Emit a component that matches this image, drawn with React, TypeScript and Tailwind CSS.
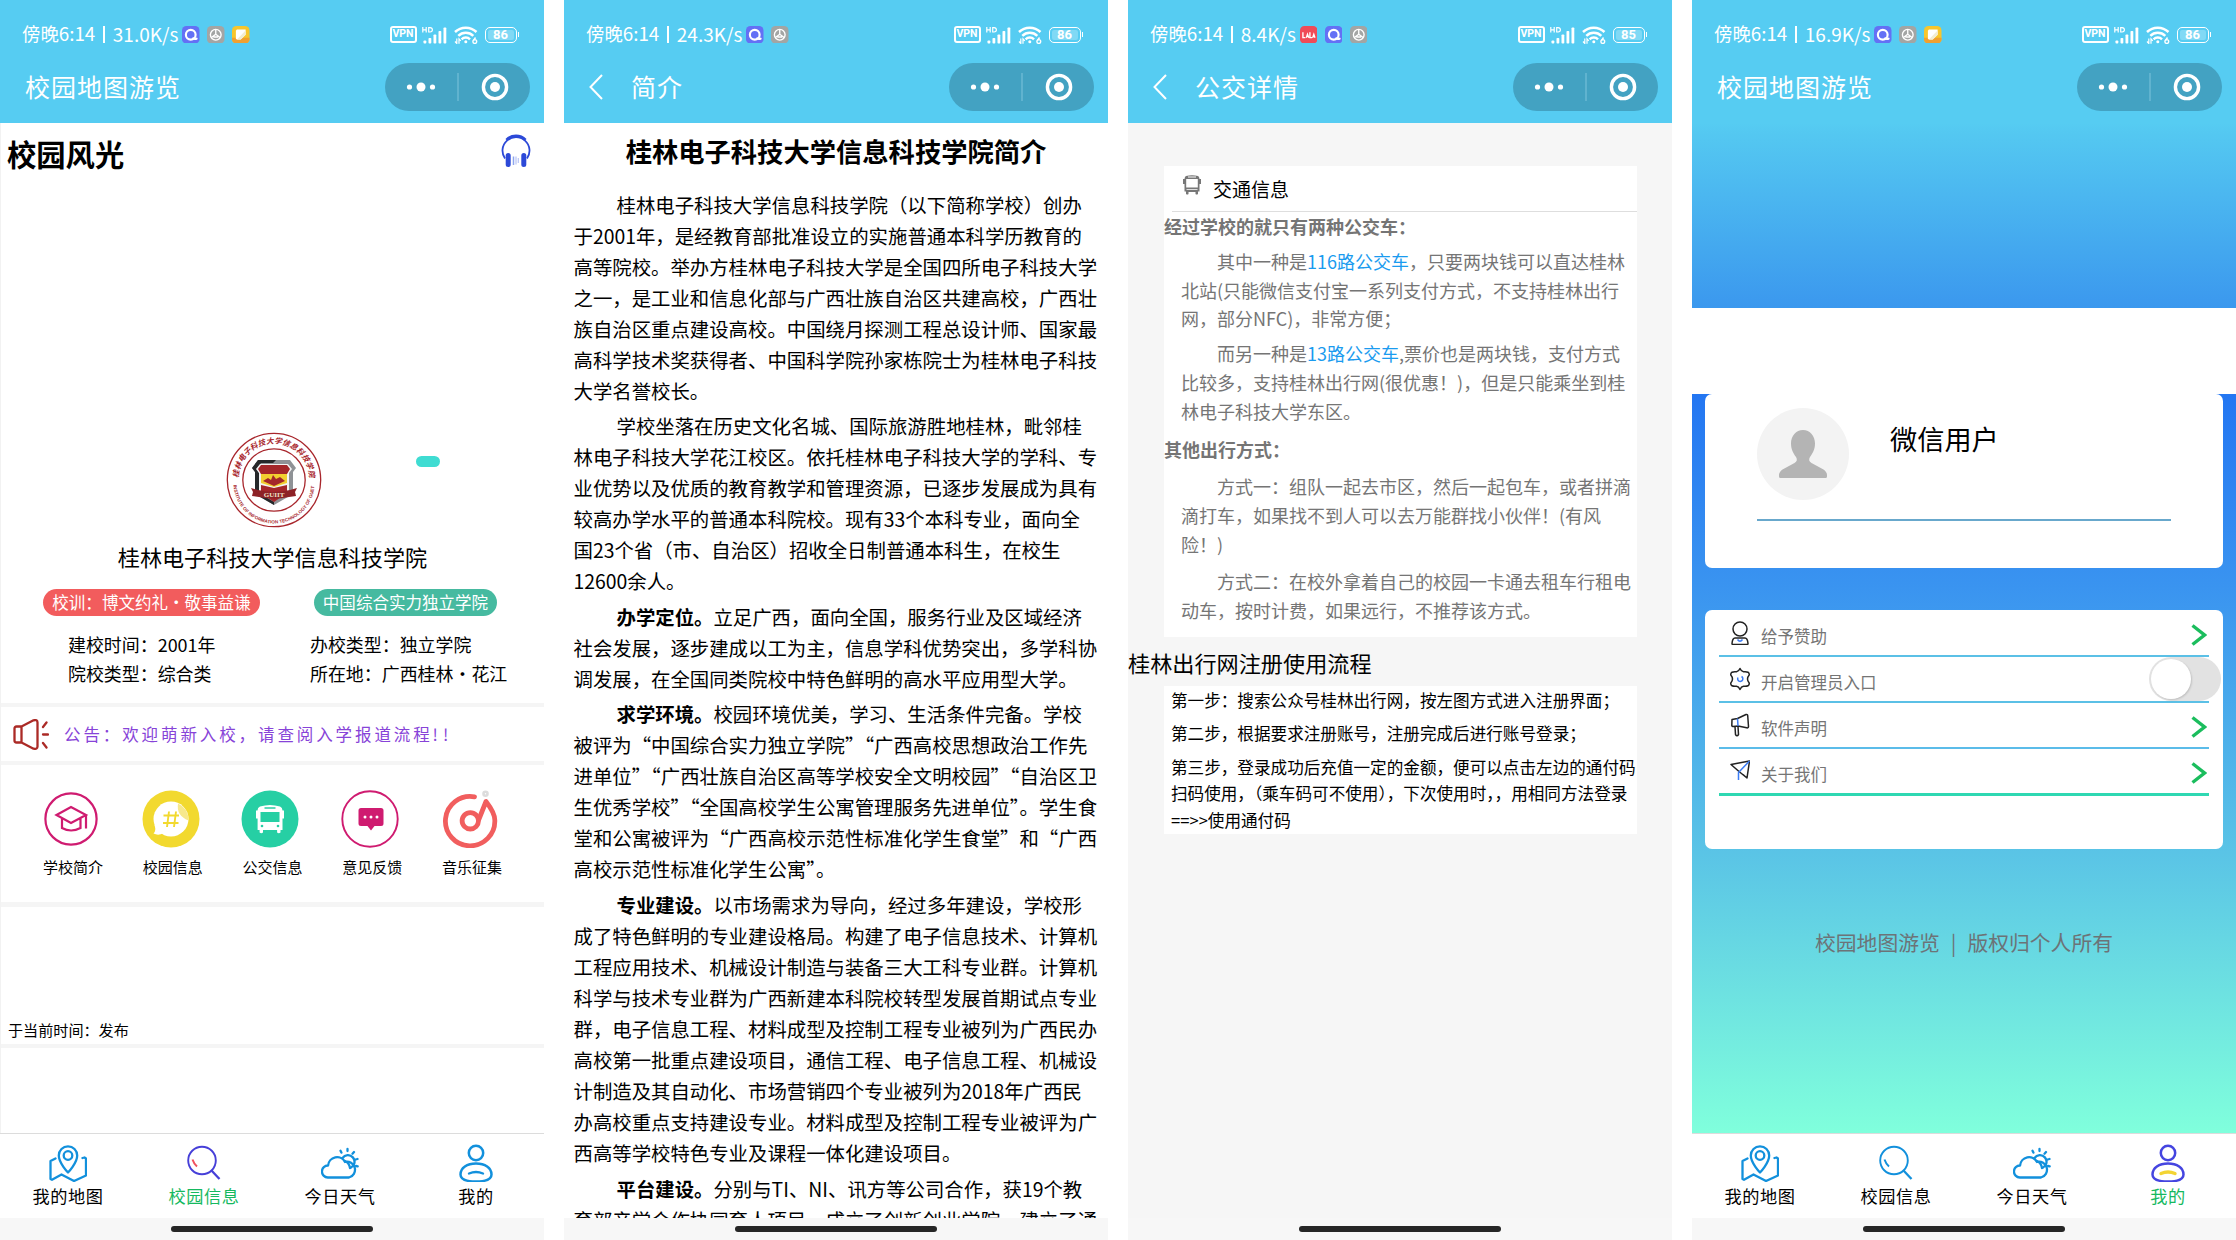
import React from "react";

type TabKey = "map" | "info" | "weather" | "me";

/* ---------- status bar ---------- */

function QApp() {
  return (
    <svg viewBox="0 0 18 18" className="h-[17.5px] w-[17.5px]">
      <rect width="18" height="18" rx="4.5" fill="#6470f5" />
      <circle cx="9" cy="9" r="5" fill="none" stroke="#fff" strokeWidth="2.2" />
      <path d="M11.500 12.800q1.500 1 3.500.2" fill="none" stroke="#fff" strokeWidth="2.200" strokeLinecap="round" />
    </svg>
  );
}

function WheelApp() {
  return (
    <svg viewBox="0 0 18 18" className="h-[17.5px] w-[17.5px]">
      <rect width="18" height="18" rx="4.5" fill="#a3a5a4" />
      <g fill="none" stroke="#fff" strokeWidth="1.4">
        <circle cx="9" cy="9" r="5.500" />
        <path d="M9 4v4.500M9 8.500l-4.500 3.300M9 8.500l4.500 3.300M6.500 11.300h5" />
      </g>
    </svg>
  );
}

function NoteApp() {
  return (
    <svg viewBox="0 0 18 18" className="h-[17.5px] w-[17.5px]">
      <rect width="18" height="18" rx="4.500" fill="#f7c62c" />
      <path d="M0 12v1.500A4.500 4.500 0 0 0 4.500 18h9a4.500 4.500 0 0 0 4.500-4.500V12z" fill="#f0a030" />
      <path d="M5 3.500h9V9l-5 5H5l-1-1V5z" fill="#fff" />
      <path d="M14 4.500V9l-5 5H5z" fill="#f2edd2" />
    </svg>
  );
}

function RedApp() {
  return (
    <svg viewBox="0 0 18 18" className="h-[17.5px] w-[17.5px]">
      <rect width="18" height="18" rx="4.500" fill="#f04b58" />
      <path d="M3 6.500v5.500h2.500M6.500 12l1.200-3.500L9 12M10.200 6.500v5.500h2.300M13 12l1.200-3.500 1.200 3.500" fill="none" stroke="#fff" strokeWidth="1.4" />
    </svg>
  );
}

const apps = { q: QApp, wheel: WheelApp, note: NoteApp, red: RedApp };

function Signal() {
  return (
    <svg viewBox="0 0 25 18" className="ml-[5px] h-[18px] w-[25px]" fill="#fff">
      <path d="M.8 1v5.600M4.200 1v5.600M.8 3.800h3.400M6.700 1.600v4.400h1.300q2.400-.2 2.400-2.200t-2.400-2.200z" stroke="#fff" strokeWidth="1.200" fill="none" />
      <rect x="1.500" y="14.500" width="2.800" height="3" rx=".8" />
      <rect x="6.500" y="12" width="2.800" height="5.500" rx=".8" />
      <rect x="11.500" y="8.500" width="2.800" height="9" rx=".8" />
      <rect x="16.500" y="5" width="2.800" height="12.500" rx=".8" />
      <rect x="21.500" y="1.500" width="2.800" height="16" rx=".8" />
    </svg>
  );
}

function Wifi() {
  return (
    <svg viewBox="0 0 24 18" className="ml-[7px] h-[18px] w-6" fill="none" stroke="#fff" strokeWidth="2.500">
      <path d="M1 6a15.500 15.500 0 0 1 21.500 0" />
      <path d="M4.300 9.800a10.600 10.600 0 0 1 15 0" />
      <path d="M7.600 13.300a6 6 0 0 1 8.400 0" />
      <circle cx="11.800" cy="15.800" r="1.500" fill="#fff" stroke="none" />
      <path d="M2.800 12.500v5l-1.800-2M5 17.800v-5l1.800 2" strokeWidth="1.200" />
      <path d="M21.500 11.500l-2 3" strokeWidth="1.400" />
      <circle cx="20.800" cy="15.500" r="1.900" strokeWidth="1.400" />
    </svg>
  );
}

function StatusBar({ speed, icons, battery }: { speed: string; icons: (keyof typeof apps)[]; battery: string }) {
  return (
    <div className="flex h-[21px] items-center pl-[22px] pr-[25px] text-white">
      <span className="-mt-[2.500px] whitespace-nowrap text-[18.4px] leading-[21px]">
        傍晚<span className="text-[18.800px]">6:14</span>
      </span>
      <span className="mx-[8px] h-[17px] w-[1.500px] bg-white" />
      <span className="-mt-[2.500px] whitespace-nowrap text-[19px] leading-[21px]">{speed}</span>
      <span className="ml-[4px] flex gap-[7.500px]">
        {icons.map((k) => {
          const I = apps[k];
          return <I key={k} />;
        })}
      </span>
      <span className="ml-auto flex h-[17px] w-[27px] items-center justify-center rounded-[3px] border-2 border-white font-[Roboto] text-[10.500px] font-bold leading-none">
        VPN
      </span>
      <Signal />
      <Wifi />
      <span className="ml-[7px] flex h-4 w-8 items-center justify-center rounded-[5px] border-[1.500px] border-white p-[2px]">
        <span className="flex h-full w-full items-center justify-center rounded-[2px] bg-white/25 font-[Roboto] text-[13px] font-bold leading-none">
          {battery}
        </span>
      </span>
      <span className="ml-px h-[5px] w-[1.500px] bg-white" />
    </div>
  );
}

function Header({
  title, back, speed, icons, battery = "86",
}: { title: string; back?: boolean; speed: string; icons: (keyof typeof apps)[]; battery?: string }) {
  return (
    <header className="h-[123px] shrink-0 bg-[#56ccf2] pt-[24px]">
      <StatusBar speed={speed} icons={icons} battery={battery} />
      <div className="mt-[18px] flex h-12 items-center pl-[25px] pr-[14px] text-white">
        {back && (
          <svg viewBox="0 0 14 26" className="mr-[28px] h-[26px] w-[14px]" fill="none" stroke="#fff" strokeWidth="2">
            <path d="M13 1L1.500 13 13 25" />
          </svg>
        )}
        <h1 className="-mt-[3px] whitespace-nowrap text-[25px] leading-[48px] tracking-[1px]">{title}</h1>
        <div className="ml-auto flex h-12 w-[145px] items-center rounded-full bg-[#43a2c2]">
          <svg viewBox="0 0 145 48" className="h-12 w-[145px]" fill="#fff">
            <circle cx="24.500" cy="24" r="2.600" />
            <circle cx="36" cy="24" r="4.500" />
            <circle cx="47.500" cy="24" r="2.600" />
            <path d="M73 10v28" stroke="#7fc4dc" />
            <circle cx="110" cy="24" r="11.600" fill="none" stroke="#fff" strokeWidth="3.400" />
            <circle cx="110" cy="24" r="5" />
          </svg>
        </div>
      </div>
    </header>
  );
}

/* ---------- tab bar ---------- */

function TabIcon({ kind, active }: { kind: TabKey; active: boolean }) {
  const c = "#1290dc";
  if (kind === "map")
    return (
      <svg viewBox="0 0 38 38" className="h-[38px] w-[38px]" fill="none" stroke={c} strokeWidth="2.300" strokeLinecap="round" strokeLinejoin="round">
        <path d="M19 28.500S9.800 19 9.800 11.500a9.200 9.200 0 0 1 18.400 0C28.200 19 19 28.500 19 28.500z" />
        <circle cx="19" cy="11.500" r="4.300" />
        <path d="M6.500 14.500L1.500 17v18l1.500.8 9.500-5.300L25 37l12-5.500V14.500l-1.500-1-2 .5" />
      </svg>
    );
  if (kind === "info")
    return (
      <svg viewBox="0 0 38 38" className="h-[38px] w-[38px]" fill="none" stroke={active ? "#463fd8" : c} strokeWidth="1.900">
        <circle cx="17" cy="16.500" r="13.800" />
        <path d="M26.500 26.500l8 8.500" strokeWidth="2.300" />
        <path d="M7.500 15.500q1.500 4.500 4.500 7" stroke={active ? "#f0525e" : c} strokeWidth="2" />
      </svg>
    );
  if (kind === "weather")
    return (
      <svg viewBox="0 0 38 38" className="h-[38px] w-[38px]" fill="none" stroke={c} strokeWidth="2.300" strokeLinecap="round" strokeLinejoin="round">
        <path d="M6.800 33.500a6 6 0 0 1 .3-12A9 9 0 0 1 24 18a7.500 7.500 0 0 1 4 15.500z" />
        <path d="M21.500 14a6.600 6.600 0 1 1 8.500 9.600M19.500 6.800l.9 1.800M26.500 5v2M33 8l-1.500 1.700M36.500 15l-1.800.5M35 22l1.700.3" />
        <path d="M29 24a9 9 0 0 0-5-7" />
      </svg>
    );
  return (
    <svg viewBox="0 0 38 38" className="h-[38px] w-[38px]" fill="none" stroke={active ? "#4545e0" : c} strokeWidth="2.500" strokeLinecap="round">
      <circle cx="19" cy="9" r="7.200" />
      <path d="M19 19.500c9 0 15.500 4.500 15.500 11 0 5-6 7-15.500 7S3.500 35.500 3.500 30.500c0-6.500 6.500-11 15.500-11z" />
      <path d="M12 29.500q7-3 14 0" stroke={active ? "#f3d433" : c} strokeWidth={active ? 3.4 : 2.4} />
    </svg>
  );
}

const tabs: { key: TabKey; label: string }[] = [
  { key: "map", label: "我的地图" },
  { key: "info", label: "校园信息" },
  { key: "weather", label: "今日天气" },
  { key: "me", label: "我的" },
];

function HomeBar() {
  return (
    <div className="flex h-[22px] shrink-0 justify-center bg-[#f7f7f7] pt-[8px]">
      <span className="h-[6px] w-[202px] rounded-full bg-[#262626]" />
    </div>
  );
}

function TabBar({ active }: { active: TabKey }) {
  return (
    <nav className="grid h-[85px] shrink-0 grid-cols-4 border-t border-[#dcdcdc] bg-white">
      {tabs.map((t) => (
        <div key={t.key} className="flex flex-col items-center pt-[10px]">
          <TabIcon kind={t.key} active={t.key === active} />
          <span className={`mt-[4px] whitespace-nowrap text-[17.2px] leading-[20px] tracking-[0.600px] ${t.key === active ? "text-[#16b95f]" : "text-black"}`}>
            {t.label}
          </span>
        </div>
      ))}
    </nav>
  );
}

/* ---------- screen 1: campus info ---------- */

function Emblem() {
  return (
    <svg viewBox="0 0 96 96" className="h-24 w-24">
      <defs>
        <path id="arc-top" d="M12.500 47a35.500 35.500 0 0 1 71 0" />
        <path id="arc-bottom" d="M7.500 51a40.500 40.500 0 0 0 81 0" />
      </defs>
      <circle cx="48" cy="48" r="46.700" fill="#fff" stroke="#a8262c" strokeWidth="1.300" />
      <circle cx="48" cy="48" r="31.200" fill="#fff" stroke="#a8262c" strokeWidth="1.300" />
      <text fill="#a8262c" fontSize="7.600" fontWeight="700" fontFamily="Noto Sans CJK SC" fontStyle="italic">
        <textPath href="#arc-top" startOffset="1" textLength="109">桂林电子科技大学信息科技学院</textPath>
      </text>
      <text fill="#a8262c" fontSize="4.600" fontWeight="700" fontFamily="Liberation Sans">
        <textPath href="#arc-bottom" startOffset="2" textLength="122">INSTITUTE OF INFORMATION TECHNOLOGY OF GUET</textPath>
      </text>
      <path d="M32 28h32l6 8-3 4v22L48 73 29 62V40l-3-4z" fill="#8f9296" />
      <path d="M32 28h18l-3 3H35l-4 6 2 4v20l15 9v3L29 62V40l-3-4z" fill="#26282a" />
      <path d="M34 32h28l4 5-3 4v19l-15 9-15-9V41l-3-4z" fill="#f3f3f3" />
      <path d="M35 33h26l3 4-3 5H35l-3-5z" fill="#a4262a" />
      <path d="M35 42h26v9l-13 4-13-4z" fill="#f2cf30" />
      <path d="M37 49l5-3 3 2 2-5 3 4 4-2 5 4-11 5z" fill="#a4262a" />
      <path d="M35 53l13 3 13-3v8l-13 9-13-9z" fill="#a4262a" />
      <path d="M25 56l7 2q16 4 32 0l7-2-2 4 1 4-7 1q-15 3-30 0l-7-1 1-4z" fill="#8d2226" />
      <text x="48" y="64.500" textAnchor="middle" fontSize="7" fontWeight="700" fill="#f1e4c8" fontFamily="Liberation Serif">GUIIT</text>
    </svg>
  );
}

function Headphones() {
  return (
    <svg viewBox="0 0 30 33" className="h-[33px] w-[30px]" fill="none" stroke="#2c49d8">
      <path d="M4 24.500A13.500 13.500 0 1 1 26 24.500" strokeWidth="1.800" />
      <path d="M5.500 6a13.500 13.500 0 0 1 19 0" strokeWidth="3" />
      <path d="M7.200 21.500v9M22.800 21.500v9" strokeWidth="5" strokeLinecap="round" />
      <path d="M12.500 22.500v8.500" stroke="#8fa5ee" strokeWidth="1.500" />
      <path d="M15 22.500v8M17.300 24v5" stroke="#b7c4f5" strokeWidth="1.200" />
    </svg>
  );
}

function Megaphone() {
  return (
    <svg viewBox="0 0 36 31" className="h-[31px] w-9" fill="none" stroke="#ab2a26" strokeWidth="2.300" strokeLinecap="round" strokeLinejoin="round">
      <path d="M8.500 7.500h-5q-2 0-2 2v12q0 2 2 2h5zM8.500 7.500L20.500 1.300q4-1 4 2.200v24q0 3-4 2.200L8.500 23.500z" />
      <path d="M33.500 3.500L30 8M30 15.500h5M30 24l3.500 4.500" />
    </svg>
  );
}

const shortcuts = [
  {
    label: "学校简介",
    icon: (
      <svg viewBox="0 0 58 58" className="h-[58px] w-[58px]" fill="none" stroke="#cf1b70" strokeWidth="2.200">
        <circle cx="29" cy="29" r="25.600" />
        <path d="M14.500 25L29 17l15 8-15 8zM44 25v13.500M20 28.500V38q9 5 18.500 0v-9.500" />
      </svg>
    ),
  },
  {
    label: "校园信息",
    icon: (
      <svg viewBox="0 0 58 58" className="h-[58px] w-[58px]">
        <circle cx="29" cy="29" r="28.500" fill="#f2d92f" />
        <circle cx="29" cy="29" r="17.500" fill="#fff" />
        <path d="M12.500 35q2 6-1 8.500 5 2.500 10-.5z" fill="#fff" />
        <path d="M36 13.500q-2 12 10.500 17a17.500 17.500 0 0 0-10.500-17z" fill="#f7e88c" />
        <path d="M27 21.500l-2 15.500M34 21.500l-2 15.500M21.500 25.500H37M21 33h15.500" stroke="#f2d92f" strokeWidth="1.900" />
      </svg>
    ),
  },
  {
    label: "公交信息",
    icon: (
      <svg viewBox="0 0 58 58" className="h-[58px] w-[58px]">
        <circle cx="29" cy="29" r="28.500" fill="#26cfa4" />
        <path d="M19 16.500q10-3 20 0 2.500 1 2.500 4h1.500v8h-1.500V40h-2v2.500q-1.700 1.500-3.400 0V40H22v2.500q-1.700 1.500-3.400 0V40h-2V28.500H15v-8h1.500q0-3 2.500-4z" fill="#fff" />
        <path d="M23.500 17.300h11v1.500h-11zM19.500 22h19v10h-19z" fill="#26cfa4" />
        <circle cx="21" cy="36" r="1.300" fill="#26cfa4" />
        <circle cx="37" cy="36" r="1.300" fill="#26cfa4" />
      </svg>
    ),
  },
  {
    label: "意见反馈",
    icon: (
      <svg viewBox="0 0 58 58" className="h-[58px] w-[58px]">
        <circle cx="29" cy="29" r="27.700" fill="#fff" stroke="#cf1b70" strokeWidth="1.900" />
        <path d="M20 18h20q2.500 0 2.500 2.500v13Q42.500 36 40 36h-6.500L30 40.500 26.500 36H20q-2.500 0-2.500-2.500v-13Q17.500 18 20 18z" fill="#cf1b70" />
        <circle cx="24" cy="27" r="1.500" fill="#fff" />
        <circle cx="30" cy="27" r="1.500" fill="#fff" />
        <circle cx="36" cy="27" r="1.500" fill="#fff" />
      </svg>
    ),
  },
  {
    label: "音乐征集",
    icon: (
      <svg viewBox="0 0 58 58" className="h-[58px] w-[58px]" fill="none" stroke="#f15e5e" strokeWidth="4.800" strokeLinecap="round" strokeLinejoin="round">
        <path d="M33.500 6.800A24.700 24.700 0 1 0 53.800 30q0-7-8.800-18.500L38 29" />
        <circle cx="29.300" cy="30.800" r="8.200" />
        <circle cx="44.500" cy="3.800" r="2" stroke="#dcdcdc" strokeWidth="2.600" />
      </svg>
    ),
  },
];

function CampusScreen() {
  return (
    <Phone>
      <Header title="校园地图游览" speed="31.0K/s" icons={["q", "wheel", "note"]} />
      <main className="flex flex-1 flex-col border-l border-[#f2f2f2] bg-white">
        <div className="flex h-16 items-start justify-between pl-[6px] pr-[13px]">
          <h2 className="text-[29.300px] font-bold leading-[60px]">校园风光</h2>
          <div className="mt-[11px]">
            <Headphones />
          </div>
        </div>
        <div className="relative mt-[245px] flex h-24 justify-center pl-[3px]">
          <Emblem />
          <span className="absolute left-[415px] top-[24px] h-[11px] w-[24px] rounded-full bg-[#3fdcd2]" />
        </div>
        <div className="mt-[10px] h-9 text-center text-[22.100px] leading-9">桂林电子科技大学信息科技学院</div>
        <div className="mt-[15px] flex h-[27px] text-[16.550px] leading-[26px] text-white">
          <span className="ml-[42px] w-[217px] whitespace-nowrap rounded-full bg-[#f25c5d] text-center">校训：博文约礼・敬事益谦</span>
          <span className="ml-[54px] w-[183px] whitespace-nowrap rounded-full bg-[#46baa0] text-center">中国综合实力独立学院</span>
        </div>
        <div className="mt-[14px] grid h-[57px] grid-cols-[242px_1fr] pl-[67px] text-[17.950px] leading-[28.500px]">
          <span>建校时间：2001年</span>
          <span>办校类型：独立学院</span>
          <span>院校类型：综合类</span>
          <span>所在地：广西桂林・花江</span>
        </div>
        <div className="mt-[16px] h-1 bg-[#f5f5f5]" />
        <div className="flex h-[54px] items-center pl-[12px]">
          <Megaphone />
          <span className="ml-[15px] whitespace-nowrap text-[16.500px] leading-[50px] tracking-[2.900px] text-[#8743d8]">
            公告：欢迎萌新入校，请查阅入学报道流程<span className="tracking-[5px]">!!</span>
          </span>
        </div>
        <div className="h-1 bg-[#f5f5f5]" />
        <div className="flex h-[137px] pl-[20px] pt-[25px]">
          {shortcuts.map((s) => (
            <div key={s.label} className="flex w-[99.800px] flex-col items-center">
              {s.icon}
              <span className="ml-[4px] mt-[8px] text-[15px] leading-[21px]">{s.label}</span>
            </div>
          ))}
        </div>
        <div className="h-[5px] bg-[#f5f5f5]" />
        <div className="flex h-[137px] items-end pb-[5px] pl-[7px] text-[15.100px] leading-5">于当前时间：发布</div>
        <div className="h-1 bg-[#f5f5f5]" />
      </main>
      <TabBar active="info" />
      <HomeBar />
    </Phone>
  );
}

/* ---------- screen 2: introduction ---------- */

const intro: { lead?: string; lines: string[] }[] = [
  {
    lines: [
      "桂林电子科技大学信息科技学院（以下简称学校）创办",
      "于2001年，是经教育部批准设立的实施普通本科学历教育的",
      "高等院校。举办方桂林电子科技大学是全国四所电子科技大学",
      "之一，是工业和信息化部与广西壮族自治区共建高校，广西壮",
      "族自治区重点建设高校。中国绕月探测工程总设计师、国家最",
      "高科学技术奖获得者、中国科学院孙家栋院士为桂林电子科技",
      "大学名誉校长。",
    ],
  },
  {
    lines: [
      "学校坐落在历史文化名城、国际旅游胜地桂林，毗邻桂",
      "林电子科技大学花江校区。依托桂林电子科技大学的学科、专",
      "业优势以及优质的教育教学和管理资源，已逐步发展成为具有",
      "较高办学水平的普通本科院校。现有33个本科专业，面向全",
      "国23个省（市、自治区）招收全日制普通本科生，在校生",
      "12600余人。",
    ],
  },
  {
    lead: "办学定位。",
    lines: [
      "立足广西，面向全国，服务行业及区域经济",
      "社会发展，逐步建成以工为主，信息学科优势突出，多学科协",
      "调发展，在全国同类院校中特色鲜明的高水平应用型大学。",
    ],
  },
  {
    lead: "求学环境。",
    lines: [
      "校园环境优美，学习、生活条件完备。学校",
      "被评为“中国综合实力独立学院”“广西高校思想政治工作先",
      "进单位”“广西壮族自治区高等学校安全文明校园”“自治区卫",
      "生优秀学校”“全国高校学生公寓管理服务先进单位”。学生食",
      "堂和公寓被评为“广西高校示范性标准化学生食堂”和“广西",
      "高校示范性标准化学生公寓”。",
    ],
  },
  {
    lead: "专业建设。",
    lines: [
      "以市场需求为导向，经过多年建设，学校形",
      "成了特色鲜明的专业建设格局。构建了电子信息技术、计算机",
      "工程应用技术、机械设计制造与装备三大工科专业群。计算机",
      "科学与技术专业群为广西新建本科院校转型发展首期试点专业",
      "群，电子信息工程、材料成型及控制工程专业被列为广西民办",
      "高校第一批重点建设项目，通信工程、电子信息工程、机械设",
      "计制造及其自动化、市场营销四个专业被列为2018年广西民",
      "办高校重点支持建设专业。材料成型及控制工程专业被评为广",
      "西高等学校特色专业及课程一体化建设项目。",
    ],
  },
  {
    lead: "平台建设。",
    lines: [
      "分别与TI、NI、讯方等公司合作，获19个教",
      "育部产学合作协同育人项目，成立了创新创业学院，建立了通",
    ],
  },
];

function IntroScreen() {
  return (
    <Phone>
      <Header title="简介" back speed="24.3K/s" icons={["q", "wheel"]} />
      <main className="min-h-0 flex-1 overflow-hidden bg-white">
        <h2 className="mt-[3px] h-[50px] text-center text-[26.300px] font-bold leading-[50px]">桂林电子科技大学信息科技学院简介</h2>
        <div className="mt-[12.500px] flex flex-col gap-[4.450px] pl-[9.500px] text-[19.400px] leading-[31.030px]">
          {intro.map((p, i) => (
            <p key={i} className="indent-[43px]">
              {p.lines.map((l, j) => (
                <span key={j} className="block whitespace-nowrap [&:not(:first-child)]:indent-0">
                  {j === 0 && p.lead && <b>{p.lead}</b>}
                  {l}
                </span>
              ))}
            </p>
          ))}
        </div>
      </main>
      <HomeBar />
    </Phone>
  );
}

/* ---------- screen 3: bus details ---------- */

function Lines({ children, className = "" }: { children: React.ReactNode[]; className?: string }) {
  return (
    <p className={`pl-[17px] ${className}`}>
      {children.map((c, i) => (
        <span key={i} className="block whitespace-nowrap first:indent-9">
          {c}
        </span>
      ))}
    </p>
  );
}

function BusScreen() {
  return (
    <Phone>
      <Header title="公交详情" back speed="8.4K/s" icons={["red", "q", "wheel"]} battery="85" />
      <main className="flex-1 bg-[#f6f6f6] pt-[43px]">
        <section className="ml-[36px] h-[471px] w-[473px] bg-white text-[18px] leading-[28.800px] text-[#757575]">
          <div className="ml-[8px] flex h-[46px] border-b border-[#dedede] pl-[11px] pt-[9px]">
            <svg viewBox="0 0 18 20" className="h-5 w-[18px]" fill="#777">
              <path d="M3 1Q9-.5 15 1q1.300.5 1.500 3H18v5h-1.500v7.500H15V19q-1.500 1-2.500 0v-2h-7v2Q4.500 20 3 19v-2.500H1.500V9H0V4h1.500Q1.700 1.500 3 1zM3.200 4v8.500h11.600V4zM5 1.500v1h8v-1z" fillRule="evenodd" />
              <path d="M3.500 14.500h11" stroke="#ddd" />
            </svg>
            <span className="ml-[12px] text-[19px] leading-[27px] text-black">交通信息</span>
          </div>
          <h3 className="font-bold">经过学校的就只有两种公交车：</h3>
          <Lines className="mt-[6px]">
            {[
              <React.Fragment key="a">
                其中一种是<span className="text-[#1a9bef]">116路公交车</span>，只要两块钱可以直达桂林
              </React.Fragment>,
              "北站(只能微信支付宝一系列支付方式，不支持桂林出行",
              "网，部分NFC)，非常方便；",
            ]}
          </Lines>
          <Lines className="mt-[6px]">
            {[
              <React.Fragment key="b">
                而另一种是<span className="text-[#1a9bef]">13路公交车</span>,票价也是两块钱，支付方式
              </React.Fragment>,
              "比较多，支持桂林出行网(很优惠！)，但是只能乘坐到桂",
              "林电子科技大学东区。",
            ]}
          </Lines>
          <h3 className="mt-[9px] font-bold">其他出行方式：</h3>
          <Lines className="mt-[9px]">
            {["方式一：组队一起去市区，然后一起包车，或者拼滴", "滴打车，如果找不到人可以去万能群找小伙伴！(有风", "险！)"]}
          </Lines>
          <Lines className="mt-[8px]">
            {["方式二：在校外拿着自己的校园一卡通去租车行租电", "动车，按时计费，如果远行，不推荐该方式。"]}
          </Lines>
        </section>
        <h2 className="h-[49px] text-[22.150px] leading-[50px]">桂林出行网注册使用流程</h2>
        <section className="ml-[36px] flex h-[148px] w-[473px] flex-col gap-[6.800px] bg-white pl-[7px] pt-px text-[16.600px] leading-[26.600px]">
          <p>第一步：搜索公众号桂林出行网，按左图方式进入注册界面；</p>
          <p>第二步，根据要求注册账号，注册完成后进行账号登录；</p>
          <p className="whitespace-nowrap">
            第三步，登录成功后充值一定的金额，便可以点击左边的通付码
            <br />
            扫码使用，（乘车码可不使用），下次使用时，，用相同方法登录
            <br />
            ==&gt;&gt;使用通付码
          </p>
        </section>
      </main>
      <HomeBar />
    </Phone>
  );
}

/* ---------- screen 4: profile ---------- */

const menu = [
  {
    label: "给予赞助",
    icon: (
      <>
        <circle cx="10" cy="8" r="7" />
        <path d="M5 17h10q2.500 0 3 5.500 0 1-1 1H3q-1 0-1-1Q2.500 17 5 17z" />
        <path d="M7.500 18.500q2.500 3.500 5 0" stroke="#3b7cf5" />
      </>
    ),
  },
  {
    label: "开启管理员入口",
    toggle: true,
    icon: (
      <>
        <path d="M10 1.500q1.300 3 3.500 3.300 3-.3 4.500.4 1.500 1 1.200 2.800-1.700 2-1.700 4t1.700 4q.3 1.800-1.200 2.800-1.500.7-4.500.4-2.200.3-3.500 3.300-1.300-3-3.500-3.300-3 .3-4.500-.4Q.5 17.800.8 16q1.700-2 1.700-4T.8 8Q.5 6.200 2 5.200q1.500-.7 4.500-.4Q8.700 4.500 10 1.500z" />
        <path d="M8 10.500a2.600 2.600 0 1 0 3.500-1" stroke="#3b7cf5" />
      </>
    ),
  },
  {
    label: "软件声明",
    icon: (
      <>
        <path d="M2 6.500l5.500-1L16 1.500q1.500-.3 1.700 1l.8 11q-.3 1.700-1.800 1.300L8 13l-5 .5q-1 0-1.200-1zM5 13.500l.5 8q1.500 2.500 3 0l-.5-8" />
        <path d="M7.500 5.500L8 13" stroke="#3b7cf5" />
      </>
    ),
  },
  {
    label: "关于我们",
    icon: (
      <>
        <path d="M1 5.500L19.500 2 17 19 9 12.500zM17 19l-4-3.500" />
        <path d="M19.500 2L8.500 13.500V21" stroke="#3b7cf5" />
      </>
    ),
  },
];

const rowClasses = [
  "h-[46px] border-b-2 border-[#5bc0e6]",
  "h-[46px] border-b-2 border-[#5bc0e6]",
  "h-[46px] border-b-2 border-[#5bbce9]",
  "h-[47px] border-b-[3px] border-[#2fd8b2]",
];

function ProfileScreen() {
  return (
    <Phone>
      <Header title="校园地图游览" speed="16.9K/s" icons={["q", "wheel", "note"]} />
      <main className="flex flex-1 flex-col bg-[linear-gradient(#56ccf2_0px,#54c8f1_10px,#3b98ee_184px,#2376f2_270px,#3a94f0_465px,#5ac4e6_730px,#80ffdc_1010px)]">
        <div className="mt-[184.500px] h-[86px] bg-white" />
        <section className="mx-[13px] h-[174px] rounded-[7px] bg-white px-[52px]">
          <div className="flex h-[127px] border-b-2 border-[#68a8cc]">
            <svg viewBox="0 0 92 92" className="mt-[14px] h-[92px] w-[92px]">
              <circle cx="46" cy="46" r="46" fill="#f3f3f3" />
              <path d="M46 22c7 0 12 6 12 13.500 0 6-2.500 10-5 13.500-1.500 2.500-1 4.500 1.500 6l12 6.500Q70 64 70 67v1.500q0 1.500-1.500 1.500h-45Q22 70 22 68.500V67q0-3 3.500-5.500l12-6.500c2.500-1.500 3-3.500 1.500-6-2.500-3.500-5-7.500-5-13.500C34 28 39 22 46 22z" fill="#b4b4b4" />
            </svg>
            <span className="ml-[41px] mt-[25px] text-[27.200px] leading-[38px]">微信用户</span>
          </div>
        </section>
        <section className="mx-[13px] mt-[42px] h-[239px] rounded-[7px] bg-white px-[14px]">
          {menu.map((m, i) => (
            <div key={m.label} className={`flex items-center ${i === 0 ? "mt-[1px]" : ""} ${rowClasses[i]}`}>
              <svg viewBox="0 0 20 24" className="ml-[11px] h-6 w-5" fill="none" stroke="#222" strokeWidth="1.500" strokeLinejoin="round">
                {m.icon}
              </svg>
              <span className="ml-[11px] mt-[6px] text-[16.500px] leading-6 text-[#757575]">{m.label}</span>
              {m.toggle ? (
                <span className="-mr-[12px] ml-auto flex h-11 w-[72px] shrink-0 items-center rounded-full bg-[#e2e2e2] pl-[2px]">
                  <span className="h-[40px] w-[40px] rounded-full bg-white shadow-[1px_1px_2px_rgba(0,0,0,0.15)]" />
                </span>
              ) : (
                <svg viewBox="0 0 16 22" className="ml-auto mr-[2px] mt-[5px] h-[22px] w-4" fill="none" stroke="#1bbd5d" strokeWidth="3.400">
                  <path d="M1.500 1.500L13.500 11 1.500 20.500" />
                </svg>
              )}
            </div>
          ))}
        </section>
        <footer className="mt-[77.500px] whitespace-pre text-center text-[20.800px] leading-8 text-[#6c7377]">校园地图游览<span className="mx-[11px]">|</span>版权归个人所有</footer>
      </main>
      <TabBar active="me" />
      <HomeBar />
    </Phone>
  );
}

function Phone({ children }: { children: React.ReactNode }) {
  return <div className="flex h-[1240px] w-[544px] shrink-0 flex-col overflow-hidden">{children}</div>;
}

export default function App() {
  return (
    <div lang="zh-CN" className="flex h-[1240px] w-[2236px] gap-5 overflow-hidden bg-white font-['Noto_Sans_CJK_SC',sans-serif] text-black">
      <CampusScreen />
      <IntroScreen />
      <BusScreen />
      <ProfileScreen />
    </div>
  );
}
